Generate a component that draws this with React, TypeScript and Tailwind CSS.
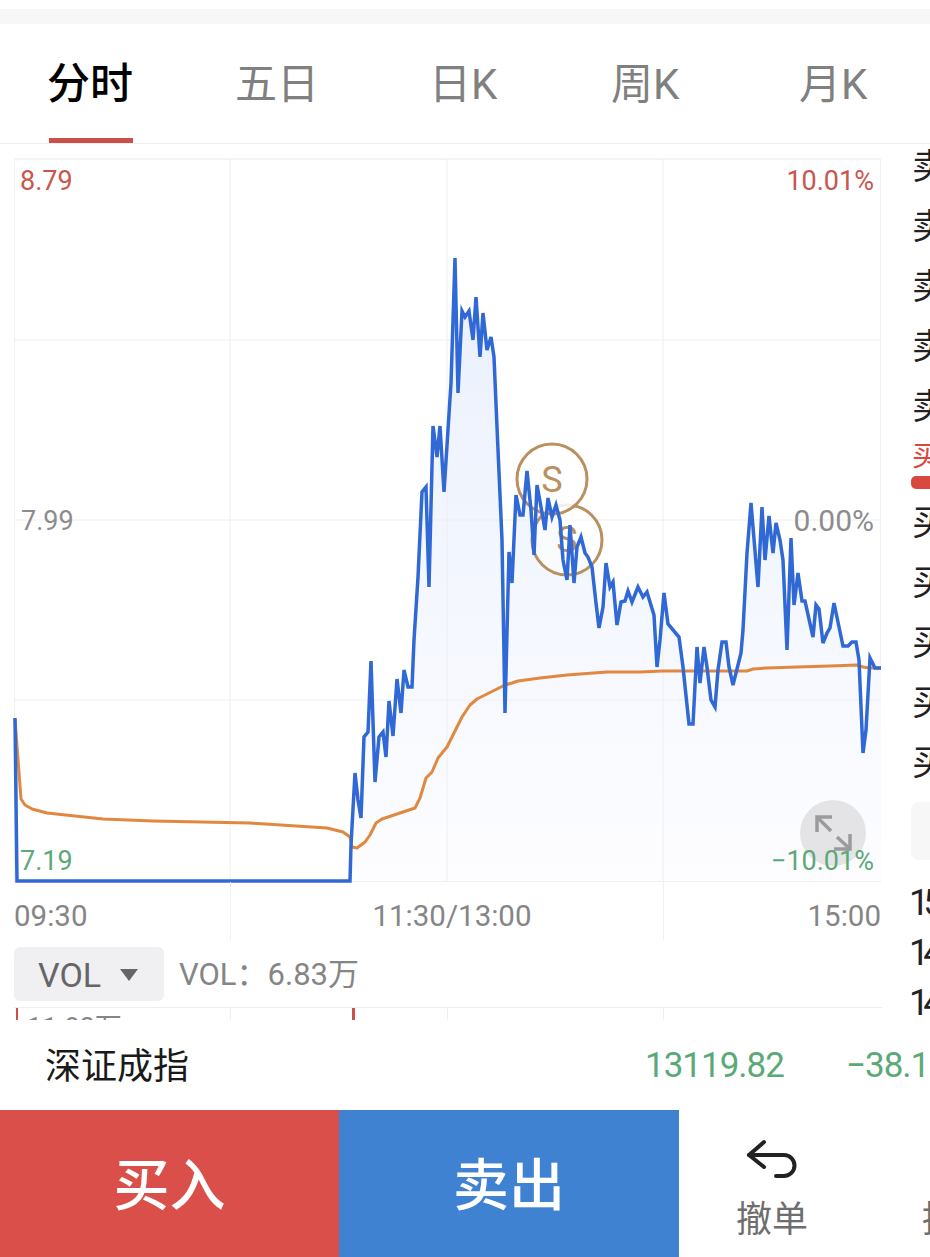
const bluePoints =
	"15,718 17,881 350,881 351,845 355,773 358,800 361,818 364,737 368,732 371,661 375,782 379,737 383,732 386,757 389,701 393,736 397,679 401,713 404,670 408,687 412,687 414,640 418,577 422,492 426,487 429,587 433,426 437,457 440,426 444,492 451,383 455,258 458,393 462,311 465,317 469,311 473,340 476,297 480,357 483,313 487,350 491,337 494,357 497,427 502,540 505,713 509,552 512,583 516,495 520,515 523,515 527,471 531,510 534,555 537,485 541,507 545,530 548,498 552,517 556,505 560,520 563,560 567,580 570,525 574,583 577,547 581,537 585,553 588,557 592,567 596,603 599,628 603,607 606,563 610,587 613,582 617,625 621,602 625,601 628,591 632,602 636,592 638,587 643,597 647,592 650,602 654,615 657,667 660,640 664,593 668,624 679,637 683,667 689,724 693,724 697,647 700,683 704,647 707,667 711,700 715,707 718,670 722,642 726,642 729,667 733,685 741,653 743,630 747,553 751,503 758,587 762,507 765,560 769,516 773,553 776,523 780,540 783,560 787,650 791,538 794,605 798,573 802,601 805,601 813,637 816,605 819,609 823,643 827,633 830,628 834,603 843,646 848,646 852,642 856,642 859,660 863,753 866,730 870,658 875,668 881,668"

const orangePoints =
	"15,719 21,799 25,805 32,809 47,813 103,819 153,821 250,823 327,828 343,832 350,837 352,847 357,848 365,842 370,835 376,823 382,819 400,813 415,808 420,798 426,778 432,772 438,758 447,747 457,727 462,717 470,705 477,699 497,689 505,685 512,683 518,681 540,678 567,675 607,672 640,672 663,671 690,671 747,671 753,669 767,668 797,667 830,666 857,665 863,667 870,668 881,668"

const gridX = [230, 447, 663]
const gridY = [340, 520, 700]
const askRows = [0, 1, 2, 3, 4]

function PriceChart() {
	return (
		<svg
			className="block h-[724px] w-[868px] overflow-visible"
			viewBox="14 158 868 724"
			fill="none"
		>
			<defs>
				<linearGradient id="area" gradientUnits="userSpaceOnUse" x1="0" y1="258" x2="0" y2="881">
					<stop offset="0" stopColor="#e9f0fd" />
					<stop offset="1" stopColor="#fdfdff" />
				</linearGradient>
			</defs>
			<rect x="14.5" y="159.5" width="866" height="722" stroke="#f0f0f2" />
			<line x1="14" y1="159" x2="881" y2="159" stroke="#f4f4f5" strokeWidth="2" />
			<polygon points={`${bluePoints} 881,881 15,881`} fill="url(#area)" />
			{gridX.map((x) => (
				<line key={x} x1={x} y1="159" x2={x} y2="881" stroke="#eeeef0" />
			))}
			{gridY.map((y) => (
				<line key={y} x1="14" y1={y} x2="881" y2={y} stroke="#eeeef0" />
			))}
			<circle cx="567" cy="540" r="35" fill="#ffffff" fillOpacity="0.5" stroke="#b8915f" strokeWidth="3" />
			<text x="567" y="552" textAnchor="middle" fontSize="36" fill="#b8915f">
				S
			</text>
			<circle cx="552" cy="479" r="35" fill="#ffffff" fillOpacity="0.85" stroke="#b8915f" strokeWidth="3" />
			<text x="552" y="492" textAnchor="middle" fontSize="36" fill="#b8915f">
				S
			</text>
			<polyline points={orangePoints} stroke="#e2873f" strokeWidth="3" strokeLinejoin="round" />
			<polyline points={bluePoints} stroke="#3069d6" strokeWidth="3.5" strokeLinejoin="miter" />
		</svg>
	)
}

function ExpandIcon() {
	return (
		<svg className="h-[66px] w-[66px]" viewBox="0 0 66 66" fill="none" stroke="#9b9b9d" strokeWidth="3.5">
			<path d="M17 32V17H32" />
			<path d="M17 17L31 31" />
			<path d="M34 49H50V34" />
			<path d="M37 37L50 49" />
		</svg>
	)
}

export default function App() {
	return (
		<div className="h-[1257px] w-[930px] overflow-hidden bg-white pt-[9px] font-['Roboto','Noto_Sans_CJK_SC',sans-serif]">
			<div className="h-[15px] bg-[#f7f7f7]" />

			<div className="flex h-[120px] items-center border-[#eeeeee] border-b pl-[49px] text-[#808080] text-[42px] leading-none">
				<div className="relative flex h-full w-[186px] items-center font-medium text-[43px] text-black">
					<span className="mt-[1px] -ml-[2px]">分时</span>
					<div className="absolute bottom-0 left-0 h-[5px] w-[84px] bg-[#c9514a]" />
				</div>
				<span className="mt-[2px] w-[194px]">五日</span>
				<span className="mt-[2px] w-[182px]">日K</span>
				<span className="mt-[2px] w-[188px]">周K</span>
				<span className="mt-[2px]">月K</span>
			</div>

			<div className="flex h-[876px] overflow-hidden">
				<div className="ml-[14px] w-[868px] shrink-0 pt-[14px]">
					<div className="relative h-[724px]">
						<PriceChart />
						<button className="absolute top-[642px] right-[16px] flex rounded-full bg-[#e4e4e6]">
							<ExpandIcon />
						</button>
						<span className="absolute top-[7px] left-[6px] text-[#c9564c] text-[27px] leading-[32px]">8.79</span>
						<span className="absolute top-[7px] right-[8px] text-[#c9564c] text-[27px] leading-[32px]">10.01%</span>
						<span className="absolute top-[347px] left-[7px] text-[#8c8c8c] text-[27px] leading-[32px]">7.99</span>
						<span className="absolute top-[347px] right-[8px] text-[#8c8c8c] text-[30px] leading-[32px]">0.00%</span>
						<span className="absolute top-[687px] left-[6px] text-[#5aa977] text-[27px] leading-[32px]">7.19</span>
						<span className="absolute top-[687px] right-[8px] text-[#5aa977] text-[27px] leading-[32px]">−10.01%</span>
					</div>

					<div className="relative flex h-[58px] justify-between pt-[18px] pr-px pl-0 text-[#858585] text-[29.5px] leading-[32px]">
						<div className="absolute top-0 left-[216px] h-full w-px bg-[#f0f0f2]" />
						<div className="absolute top-0 left-[649px] h-full w-px bg-[#f0f0f2]" />
						<span>09:30</span>
						<span className="ml-[9px]">11:30/13:00</span>
						<span>15:00</span>
					</div>

					<div className="mt-[7px] flex h-[54px] items-center">
						<div className="flex h-full w-[150px] items-center rounded-md bg-[#f0f0f2] pt-[2px] pl-[24px] text-[#666666] text-[34px]">
							<span>VOL</span>
							<div className="ml-[19px] h-0 w-0 border-x-[9px] border-x-transparent border-t-[12px] border-t-[#666666]" />
						</div>
						<span className="ml-[15px] pt-[2px] text-[#858585] text-[31px]">VOL：6.83万</span>
					</div>

					<div className="relative mt-[6px] h-[13px] overflow-hidden border-[#eeeeee] border-t">
						<div className="absolute top-0 left-[2px] h-full w-[2px] bg-[#c9514a]" />
						<div className="absolute top-0 left-[338px] h-full w-[3px] bg-[#c9514a]" />
						<div className="absolute top-0 left-[216px] h-full w-px bg-[#eeeeee]" />
						<div className="absolute top-0 left-[433px] h-full w-px bg-[#eeeeee]" />
						<div className="absolute top-0 left-[649px] h-full w-px bg-[#eeeeee]" />
						<span className="absolute top-[4px] left-[13px] text-[#858585] text-[27px] leading-[32px]">11.83万</span>
					</div>
				</div>

				<div className="ml-[30px] w-[18px] shrink-0 whitespace-nowrap text-[#222222] text-[35px]">
					<div className="-mt-[6px]">
						{askRows.map((row) => (
							<div key={row} className="h-[60px] leading-[60px]">
								卖
							</div>
						))}
					</div>
					<div className="mt-[4px] h-[30px] text-[#d9483f] text-[28px] leading-[30px]">买</div>
					<div className="mt-[4px] -ml-[1px] h-[13px] w-[20px] rounded-l-[5px] bg-[#d9483f]" />
					<div className="mt-[5px]">
						{askRows.map((row) => (
							<div key={row} className="h-[60px] leading-[60px]">
								买
							</div>
						))}
					</div>
					<div className="mt-[8px] -ml-[1px] h-[58px] w-[20px] rounded-l-lg bg-[#f7f7f7]" />
					<div className="mt-[18px] -ml-[3px] text-[36px] leading-[50px] tracking-[-6px]">
						<div>15.20</div>
						<div>14.80</div>
						<div>14.40</div>
					</div>
				</div>
			</div>

			<div className="flex h-[90px] items-center whitespace-nowrap pt-[3px] text-[35px]">
				<span className="ml-[45px] w-[600px] shrink-0 text-[#1a1a1a] text-[36px]">深证成指</span>
				<span className="w-[201px] shrink-0 text-[#5aa977] tracking-[-1px]">13119.82</span>
				<span className="shrink-0 text-[#5aa977] tracking-[-1px]">−38.15</span>
			</div>

			<div className="flex h-[147px]">
				<button className="flex w-[339px] shrink-0 items-center justify-center bg-[#da4f4a] pt-[5px] font-medium text-[56px] text-white">
					买入
				</button>
				<button className="flex w-[340px] shrink-0 items-center justify-center bg-[#3f82d1] pt-[5px] font-medium text-[56px] text-white">
					卖出
				</button>
				<div className="flex w-[186px] shrink-0 flex-col items-center pt-[29px]">
					<svg className="h-[40px] w-[52px]" viewBox="0 0 52 40" fill="none" stroke="#222222" strokeWidth="4" strokeLinecap="round" strokeLinejoin="round">
						<path d="M18 3L3 16L18 28" />
						<path d="M3 16H38A10.5 10.5 0 0 1 38 37H30" />
					</svg>
					<span className="mt-[21px] text-[#6e6e6e] text-[36px] leading-[40px]">撤单</span>
				</div>
				<div className="flex w-[186px] shrink-0 flex-col items-center pt-[90px]">
					<span className="text-[#6e6e6e] text-[36px] leading-[40px]">持仓</span>
				</div>
			</div>
		</div>
	)
}
